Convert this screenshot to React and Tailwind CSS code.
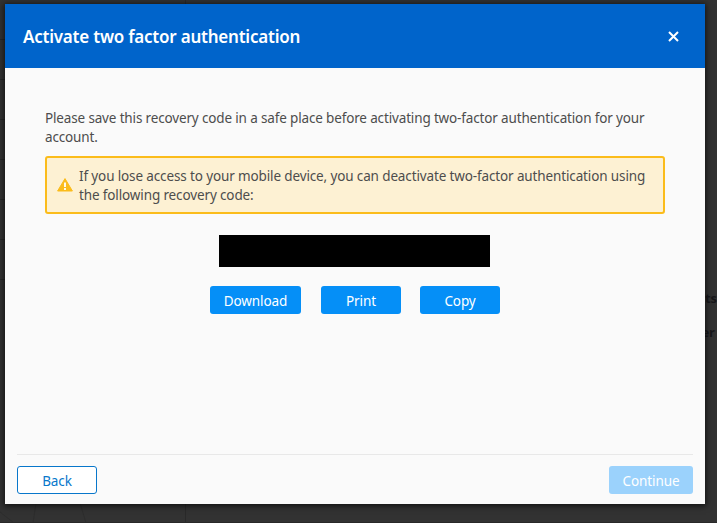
const railRows = [0, 1, 2, 3, 4, 5, 6];

function Backdrop() {
  return (
    <div className="absolute inset-0 flex bg-[#323232]">
      <div className="w-[186px] border-r border-[#292929]">
        {railRows.map((row) => (
          <div key={row} className="h-10 w-full border-b border-[#272727]" />
        ))}
        <svg className="mt-[223px] h-5 w-full" viewBox="0 0 185 20" fill="none" stroke="#2d2d2d">
          <path d="M0 9 14 20M36 0 33 20M80 0 86 20" />
        </svg>
      </div>
      <div className="flex flex-1 flex-col items-end pt-[288px] font-['Open_Sans',sans-serif] text-[13px] leading-5 font-bold text-[#17171a]">
        <span>sts</span>
        <span className="mt-3.5 mr-0.5">er</span>
      </div>
      <div className="absolute inset-x-0 bottom-0 h-px bg-[#292929]" />
    </div>
  );
}

function ActionButton({ className, children }) {
  return (
    <button className={`flex h-7 items-center justify-center rounded-[3px] text-[13.5px] leading-none tracking-[-0.1px] ${className}`}>
      <span className="pt-[3px]">{children}</span>
    </button>
  );
}

export default function App() {
  return (
    <main className="relative h-[523px] w-[717px] overflow-hidden pt-1 pl-[5px] font-['Noto_Sans',sans-serif]">
      <Backdrop />
      <section className="relative flex h-[500px] w-[700px] flex-col bg-[#fafafa] shadow-[0_1px_6px_1px_rgba(0,0,0,0.65)]">
        <header className="flex h-16 items-center justify-between bg-[#0064cb] pr-[26px] pl-[18px] text-white">
          <h1 className="pt-0.5 text-[17px] leading-6 font-semibold tracking-[-0.22px] whitespace-nowrap">Activate two factor authentication</h1>
          <button aria-label="Close" className="flex">
            <svg className="size-[11px]" viewBox="0 0 11 11" fill="none" stroke="currentColor" strokeWidth="2">
              <path d="M1 1 10 10M10 1 1 10" />
            </svg>
          </button>
        </header>
        <div className="flex flex-1 flex-col px-10 pt-[41px] text-[13.5px] leading-[19px] tracking-[-0.15px] text-[#4d4d4d]">
          <p className="whitespace-nowrap">
            <span>Please save this recovery code in a safe place before activating two-factor authentication for your</span>
            <br />
            account.
          </p>
          <div className="mt-[9px] flex h-[58px] items-center gap-1.5 rounded-[3px] border-2 border-[#fbbc1b] bg-[#fdf1d3] pl-2.5">
            <svg className="h-[14px] w-4 shrink-0" viewBox="0 0 16 14">
              <path d="M8 .6 15.4 13H.6Z" fill="#fbbc1b" stroke="#fbbc1b" strokeLinejoin="round" />
              <path d="M8 4.5V9M8 10v2" stroke="white" strokeWidth="1.8" />
            </svg>
            <p className="pt-0.5 tracking-[-0.13px] whitespace-nowrap">
              <span>If you lose access to your mobile device, you can deactivate two-factor authentication using</span>
              <br />
              the following recovery code:
            </p>
          </div>
          <div className="mt-[21px] ml-[174px] h-8 w-[271px] bg-black" />
          <div className="mt-[19px] flex justify-center gap-5">
            <ActionButton className="w-[91px] bg-[#058ff7] text-white">Download</ActionButton>
            <ActionButton className="w-20 bg-[#058ff7] text-white">Print</ActionButton>
            <ActionButton className="-ml-px w-20 bg-[#058ff7] text-white">Copy</ActionButton>
          </div>
        </div>
        <footer className="mx-3 flex h-[50px] justify-between border-t border-[#e8e8e8] pt-[11px]">
          <ActionButton className="w-20 border border-[#0877cb] bg-white text-[#0877cb]">Back</ActionButton>
          <ActionButton className="w-[84px] bg-[#9bd2fc] text-white">Continue</ActionButton>
        </footer>
      </section>
    </main>
  );
}
